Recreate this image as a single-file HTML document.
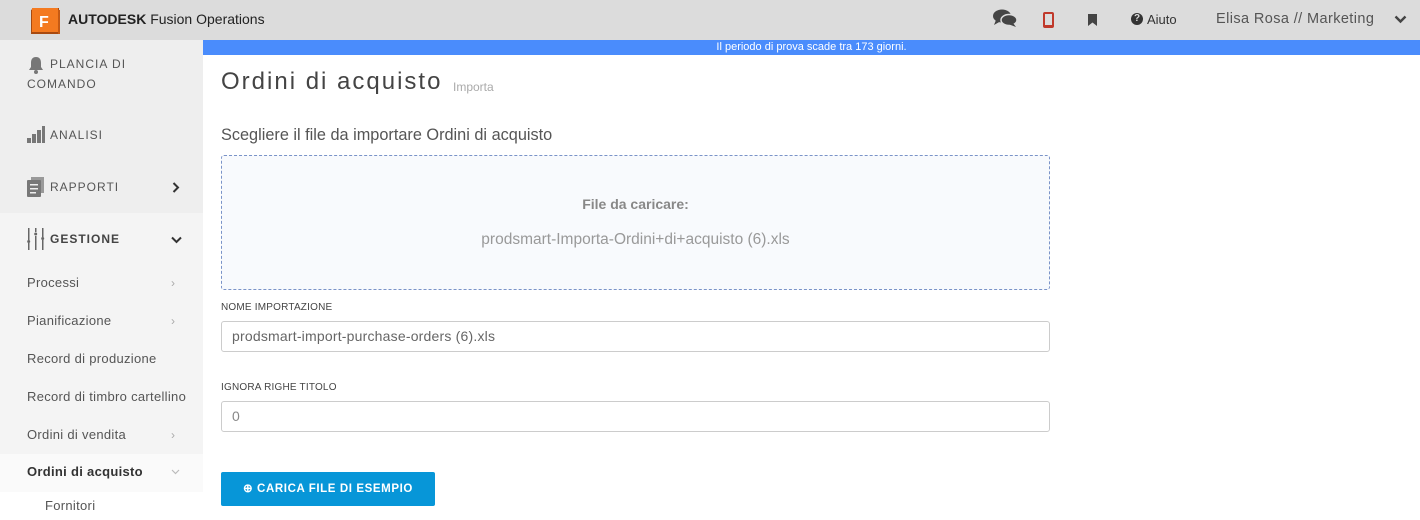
<!DOCTYPE html>
<html><head><meta charset="utf-8"><style>
*{box-sizing:border-box;margin:0;padding:0}
body{width:1420px;height:520px;overflow:hidden;background:#fff;font-family:"Liberation Sans",sans-serif;color:#555;position:relative}
.top{position:absolute;left:0;top:0;width:1420px;height:40px;background:#dcdcdc}
.abs{position:absolute;white-space:nowrap}
.side{position:absolute;left:0;top:40px;width:203px;height:480px;background:#eeeeee}
.blue{position:absolute;left:203px;top:40px;width:1217px;height:15px;background:#4a8cfc;color:#fff;font-size:11px;text-align:center;line-height:15px}
.nav{font-size:12px;letter-spacing:1px;color:#555}
.sub{font-size:13px;color:#555;letter-spacing:.3px}
.chev{color:#aaa;font-size:12px}
.lbl{font-size:10px;color:#444;letter-spacing:.2px}
.inp{position:absolute;left:221px;width:829px;height:31px;border:1px solid #ccc;border-radius:3px;font-size:14px;color:#666;padding:6px 10px;letter-spacing:.2px}
</style></head><body>
<div class="top"></div>
<svg class="abs" style="left:29px;top:7px" width="32" height="29" viewBox="0 0 32 29"><path d="M2 3 L5 1 H30 V27 H2 Z" fill="#a84a10"/><rect x="3" y="1" width="26" height="24" fill="#f47a20"/><rect x="29" y="3" width="2" height="24" fill="#c65a14"/><text x="10" y="20" fill="#fff" font-size="16" font-weight="bold" font-family="Liberation Sans">F</text></svg>
<div class="abs" style="left:68px;top:11px;font-size:14px;color:#222"><b>AUTODESK</b> Fusion Operations</div>
<svg class="abs" style="left:993px;top:9px" width="24" height="19" viewBox="0 0 24 19"><ellipse cx="9" cy="7" rx="9" ry="6.5" fill="#444"/><path d="M3 11 L1 16 L8 12Z" fill="#444"/><ellipse cx="16" cy="11" rx="8" ry="5.5" fill="#444" stroke="#dcdcdc" stroke-width="1.5"/><path d="M20 14 L23 18 L15 15Z" fill="#444"/></svg>
<div class="abs" style="left:1043px;top:12px;width:11px;height:16px;border:2px solid #c0392b;border-radius:2px;border-bottom-width:3px"></div>
<svg class="abs" style="left:1088px;top:14px" width="10" height="13"><path d="M0 0H9V12L4.5 8.5L0 12Z" fill="#444"/></svg>
<div class="abs" style="left:1131px;top:13px;width:12px;height:12px;border-radius:50%;background:#333;color:#dcdcdc;font-size:10px;font-weight:bold;text-align:center;line-height:12px">?</div>
<div class="abs" style="left:1147px;top:12px;font-size:13px;color:#333">Aiuto</div>
<div class="abs" style="left:1216px;top:11px;font-size:14.5px;color:#555;letter-spacing:.4px">Elisa Rosa // Marketing</div>
<svg class="abs" style="left:1394px;top:15px" width="13" height="9"><path d="M1.5 1.5L6.5 6.5L11.5 1.5" stroke="#444" stroke-width="2.4" fill="none"/></svg>

<div class="side"></div>
<div class="abs" style="left:0;top:213px;width:203px;height:52px;background:#f4f4f4"></div>
<div class="abs" style="left:0;top:265px;width:203px;height:189px;background:#f4f4f4"></div>
<div class="abs" style="left:0;top:454px;width:203px;height:38px;background:#fafafa"></div>
<div class="abs" style="left:0;top:492px;width:203px;height:28px;background:#fff"></div>

<svg class="abs" style="left:27px;top:56px" width="18" height="18"><path d="M9 1C5 1 4 4 4 7V11L2 14H16L14 11V7C14 4 13 1 9 1Z" fill="#777"/><circle cx="9" cy="16" r="2" fill="#777"/></svg>
<div class="abs nav" style="left:50px;top:57px">PLANCIA DI</div>
<div class="abs nav" style="left:27px;top:77px">COMANDO</div>
<svg class="abs" style="left:27px;top:125px" width="18" height="20"><rect x="0" y="13" width="4" height="5" fill="#777"/><rect x="5" y="9" width="4" height="9" fill="#777"/><rect x="10" y="5" width="4" height="13" fill="#777"/><rect x="15" y="1" width="3" height="17" fill="#777"/></svg>
<div class="abs nav" style="left:50px;top:128px">ANALISI</div>
<svg class="abs" style="left:27px;top:177px" width="18" height="20"><rect x="4" y="0" width="13" height="16" fill="#999"/><rect x="0" y="3" width="14" height="17" rx="1" fill="#777"/><rect x="3" y="7" width="8" height="1.5" fill="#eee"/><rect x="3" y="11" width="8" height="1.5" fill="#eee"/><rect x="3" y="15" width="6" height="1.5" fill="#eee"/></svg>
<div class="abs nav" style="left:50px;top:180px">RAPPORTI</div>
<svg class="abs" style="left:172px;top:182px" width="8" height="11"><path d="M1.5 1L6 5.5L1.5 10" stroke="#333" stroke-width="2" fill="none"/></svg>
<svg class="abs" style="left:27px;top:228px" width="18" height="22"><g fill="#666"><rect x="1" y="0" width="1.5" height="12"/><rect x="1" y="15" width="1.5" height="7"/><circle cx="1.7" cy="13.5" r="1.5"/><rect x="8" y="0" width="1.5" height="4"/><rect x="8" y="8" width="1.5" height="14"/><circle cx="8.7" cy="6" r="1.5"/><rect x="15" y="0" width="1.5" height="9"/><rect x="15" y="12" width="1.5" height="10"/><circle cx="15.7" cy="10.5" r="1.5"/></g></svg>
<div class="abs nav" style="left:50px;top:232px;font-weight:bold;color:#444">GESTIONE</div>
<svg class="abs" style="left:171px;top:236px" width="11" height="8"><path d="M1 1.5L5.5 6L10 1.5" stroke="#333" stroke-width="2" fill="none"/></svg>

<div class="abs sub" style="left:27px;top:275px">Processi</div><div class="abs chev" style="left:171px;top:276px">›</div>
<div class="abs sub" style="left:27px;top:313px">Pianificazione</div><div class="abs chev" style="left:171px;top:314px">›</div>
<div class="abs sub" style="left:27px;top:351px">Record di produzione</div>
<div class="abs sub" style="left:27px;top:389px">Record di timbro cartellino</div>
<div class="abs sub" style="left:27px;top:427px">Ordini di vendita</div><div class="abs chev" style="left:171px;top:428px">›</div>
<div class="abs sub" style="left:27px;top:464px;color:#333;font-weight:bold">Ordini di acquisto</div>
<svg class="abs" style="left:171px;top:469px" width="9" height="6"><path d="M1 1L4.5 4.5L8 1" stroke="#bbb" stroke-width="1.2" fill="none"/></svg>
<div class="abs sub" style="left:45px;top:498px">Fornitori</div>

<div class="blue">Il periodo di prova scade tra 173 giorni.</div>
<div class="abs" style="left:221px;top:68px;font-size:24px;color:#444;letter-spacing:2px">Ordini di acquisto</div>
<div class="abs" style="left:453px;top:80px;font-size:12px;color:#aaa">Importa</div>
<div class="abs" style="left:221px;top:126px;font-size:16.3px;color:#555">Scegliere il file da importare Ordini di acquisto</div>
<div class="abs" style="left:221px;top:155px;width:829px;height:135px;border:1px dashed #7a93c8;border-radius:3px;background:#f8fafd"></div>
<div class="abs" style="left:221px;top:196px;width:829px;text-align:center;font-size:14px;font-weight:bold;color:#888">File da caricare:</div>
<div class="abs" style="left:221px;top:231px;width:829px;text-align:center;font-size:15.5px;color:#999">prodsmart-Importa-Ordini+di+acquisto (6).xls</div>
<div class="abs lbl" style="left:221px;top:302px">NOME IMPORTAZIONE</div>
<div class="inp" style="top:321px">prodsmart-import-purchase-orders (6).xls</div>
<div class="abs lbl" style="left:221px;top:382px">IGNORA RIGHE TITOLO</div>
<div class="inp" style="top:401px;color:#888">0</div>
<div class="abs" style="left:221px;top:472px;width:214px;height:34px;background:#0796d8;border-radius:2px;color:#fff;font-size:11.5px;font-weight:bold;letter-spacing:.6px;text-align:center;line-height:34px">⊕ CARICA FILE DI ESEMPIO</div>
</body></html>
